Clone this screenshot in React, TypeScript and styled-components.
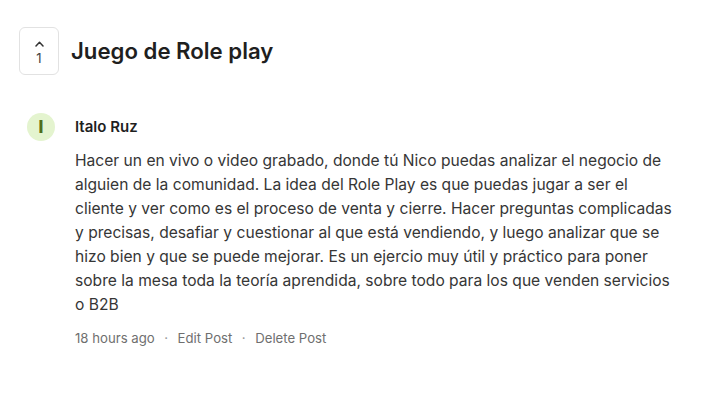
import styled, { createGlobalStyle } from 'styled-components';

const Global = createGlobalStyle`
  body {
    margin: 0;
    background: #ffffff;
    font-family: Inter, "Noto Sans", sans-serif;
    color: #222;
  }
`;

const Page = styled.div`
  width: 720px;
  height: 401px;
  padding: 27px 0 0 19px;
  box-sizing: border-box;
`;

const Header = styled.div`
  display: flex;
  align-items: center;
  gap: 12px;
`;

const VoteBox = styled.button`
  width: 40px;
  height: 48px;
  box-sizing: border-box;
  border: 1px solid #e2e2e2;
  border-radius: 6px;
  background: #fff;
  display: flex;
  flex-direction: column;
  align-items: center;
  justify-content: center;
  gap: 5px;
  padding: 4px 0 0;
  font-family: Inter, sans-serif;
  font-size: 13px;
  line-height: 1;
  color: #444;
`;

const Title = styled.h1`
  margin: 0 0 2px;
  font-size: 22.2px;
  font-weight: 600;
  color: #1f1f1f;
`;

const Post = styled.div`
  display: grid;
  grid-template-columns: 28px 620px;
  column-gap: 20px;
  margin: 38px 0 0 8px;
`;

const Avatar = styled.div`
  width: 28px;
  height: 28px;
  border-radius: 50%;
  background: #e4f4cf;
  color: #4f6e1b;
  font-weight: 800;
  font-size: 17px;
  line-height: 1;
  display: flex;
  align-items: center;
  justify-content: center;
`;

const Content = styled.div`
  display: flex;
  flex-direction: column;
`;

const Author = styled.div`
  font-size: 15px;
  font-weight: 600;
  color: #1f1f1f;
  line-height: 28px;
`;

const Body = styled.p`
  margin: 8px 0 0;
  font-size: 15.6px;
  line-height: 24px;
  color: #363636;
`;

const Meta = styled.div`
  margin-top: 13px;
  display: flex;
  align-items: center;
  gap: 9.5px;
  font-size: 13.2px;
  color: #6f6f6f;
`;

const Dot = styled.span`
  color: #999;
`;

const lines = [
  'Hacer un en vivo o video grabado, donde tú Nico puedas analizar el negocio de',
  'alguien de la comunidad. La idea del Role Play es que puedas jugar a ser el',
  'cliente y ver como es el proceso de venta y cierre. Hacer preguntas complicadas',
  'y precisas, desafiar y cuestionar al que está vendiendo, y luego analizar que se',
  'hizo bien y que se puede mejorar. Es un ejercio muy útil y práctico para poner',
  'sobre la mesa toda la teoría aprendida, sobre todo para los que venden servicios',
  'o B2B',
];

export default function App() {
  return (
    <Page>
      <Global />
      <Header>
        <VoteBox>
          <svg width="9" height="6" viewBox="0 0 9 6" fill="none">
            <path d="M1 5 L4.5 1.3 L8 5" stroke="#333" strokeWidth="1.5" strokeLinecap="round" strokeLinejoin="round" />
          </svg>
          <span>1</span>
        </VoteBox>
        <Title>Juego de Role play</Title>
      </Header>
      <Post>
        <Avatar>I</Avatar>
        <Content>
          <Author>Italo Ruz</Author>
          <Body>
            {lines.map((line, i) => (
              <span key={i}>
                {line}
                {i < lines.length - 1 && <br />}
              </span>
            ))}
          </Body>
          <Meta>
            <span>18 hours ago</span>
            <Dot>·</Dot>
            <span>Edit Post</span>
            <Dot>·</Dot>
            <span>Delete Post</span>
          </Meta>
        </Content>
      </Post>
    </Page>
  );
}
